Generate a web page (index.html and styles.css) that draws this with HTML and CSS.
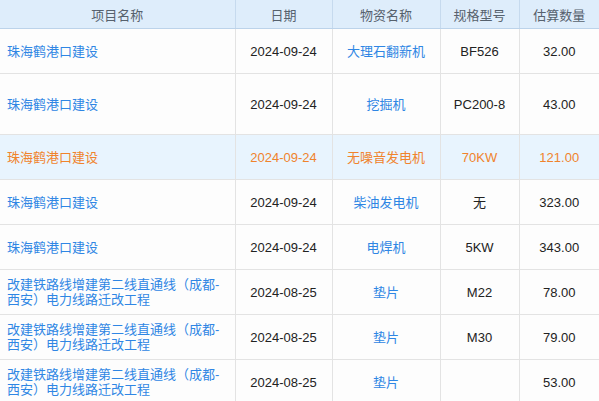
FILE: index.html
```html
<!DOCTYPE html>
<html lang="zh-CN">
<head>
<meta charset="utf-8">
<title>物资估算</title>
<link rel="stylesheet" href="styles.css">
</head>
<body>
<table class="grid">
  <colgroup>
    <col class="c-proj">
    <col class="c-date">
    <col class="c-name">
    <col class="c-spec">
    <col class="c-qty">
  </colgroup>
  <thead>
    <tr class="head">
      <th>项目名称</th>
      <th>日期</th>
      <th>物资名称</th>
      <th>规格型号</th>
      <th>估算数量</th>
    </tr>
  </thead>
  <tbody>
    <tr class="row">
      <td class="proj"><a class="link">珠海鹤港口建设</a></td>
      <td>2024-09-24</td>
      <td><a class="link">大理石翻新机</a></td>
      <td>BF526</td>
      <td>32.00</td>
    </tr>
    <tr class="row tall">
      <td class="proj"><a class="link">珠海鹤港口建设</a></td>
      <td>2024-09-24</td>
      <td><a class="link">挖掘机</a></td>
      <td>PC200-8</td>
      <td>43.00</td>
    </tr>
    <tr class="row active">
      <td class="proj"><a class="link">珠海鹤港口建设</a></td>
      <td>2024-09-24</td>
      <td><a class="link">无噪音发电机</a></td>
      <td>70KW</td>
      <td>121.00</td>
    </tr>
    <tr class="row">
      <td class="proj"><a class="link">珠海鹤港口建设</a></td>
      <td>2024-09-24</td>
      <td><a class="link">柴油发电机</a></td>
      <td>无</td>
      <td>323.00</td>
    </tr>
    <tr class="row">
      <td class="proj"><a class="link">珠海鹤港口建设</a></td>
      <td>2024-09-24</td>
      <td><a class="link">电焊机</a></td>
      <td>5KW</td>
      <td>343.00</td>
    </tr>
    <tr class="row">
      <td class="proj"><a class="link">改建铁路线增建第二线直通线（成都-西安）电力线路迁改工程</a></td>
      <td>2024-08-25</td>
      <td><a class="link">垫片</a></td>
      <td>M22</td>
      <td>78.00</td>
    </tr>
    <tr class="row">
      <td class="proj"><a class="link">改建铁路线增建第二线直通线（成都-西安）电力线路迁改工程</a></td>
      <td>2024-08-25</td>
      <td><a class="link">垫片</a></td>
      <td>M30</td>
      <td>79.00</td>
    </tr>
    <tr class="row">
      <td class="proj"><a class="link">改建铁路线增建第二线直通线（成都-西安）电力线路迁改工程</a></td>
      <td>2024-08-25</td>
      <td><a class="link">垫片</a></td>
      <td></td>
      <td>53.00</td>
    </tr>
  </tbody>
</table>
</body>
</html>
```
FILE: styles.css
```css
html, body {
  margin: 0;
  padding: 0;
  background: #ffffff;
  overflow: hidden;
}

.grid {
  width: 599px;
  table-layout: fixed;
  border-collapse: collapse;
  font-family: "Liberation Sans", "Noto Sans CJK SC", sans-serif;
  font-size: 13px;
  color: #222222;
}

.c-proj { width: 235px; }
.c-date { width: 97px; }
.c-name { width: 108px; }
.c-spec { width: 79px; }
.c-qty  { width: 80px; }

.head th {
  height: 28px;
  padding: 0;
  background: #deedfb;
  color: #56616d;
  font-weight: normal;
  text-align: center;
  border-right: 1px solid #c6daee;
  border-bottom: 1px solid #bcd3ea;
}

.head th:last-child,
.row td:last-child {
  border-right: none;
}

.row td {
  height: 44px;
  padding: 0 6px;
  background: #fdfdfd;
  text-align: center;
  vertical-align: middle;
  line-height: 15px;
  border-right: 1px solid #e3e3e3;
  border-bottom: 1px solid #e3e3e3;
}

.row.tall td {
  height: 60px;
}

.row td.proj {
  text-align: left;
  padding: 0 8px 0 7px;
}

.link {
  color: #2f86e4;
  text-decoration: none;
}

.row.active td {
  background: #e8f4fe;
  color: #f0832c;
}

.row.active .link {
  color: #f0832c;
}
```
